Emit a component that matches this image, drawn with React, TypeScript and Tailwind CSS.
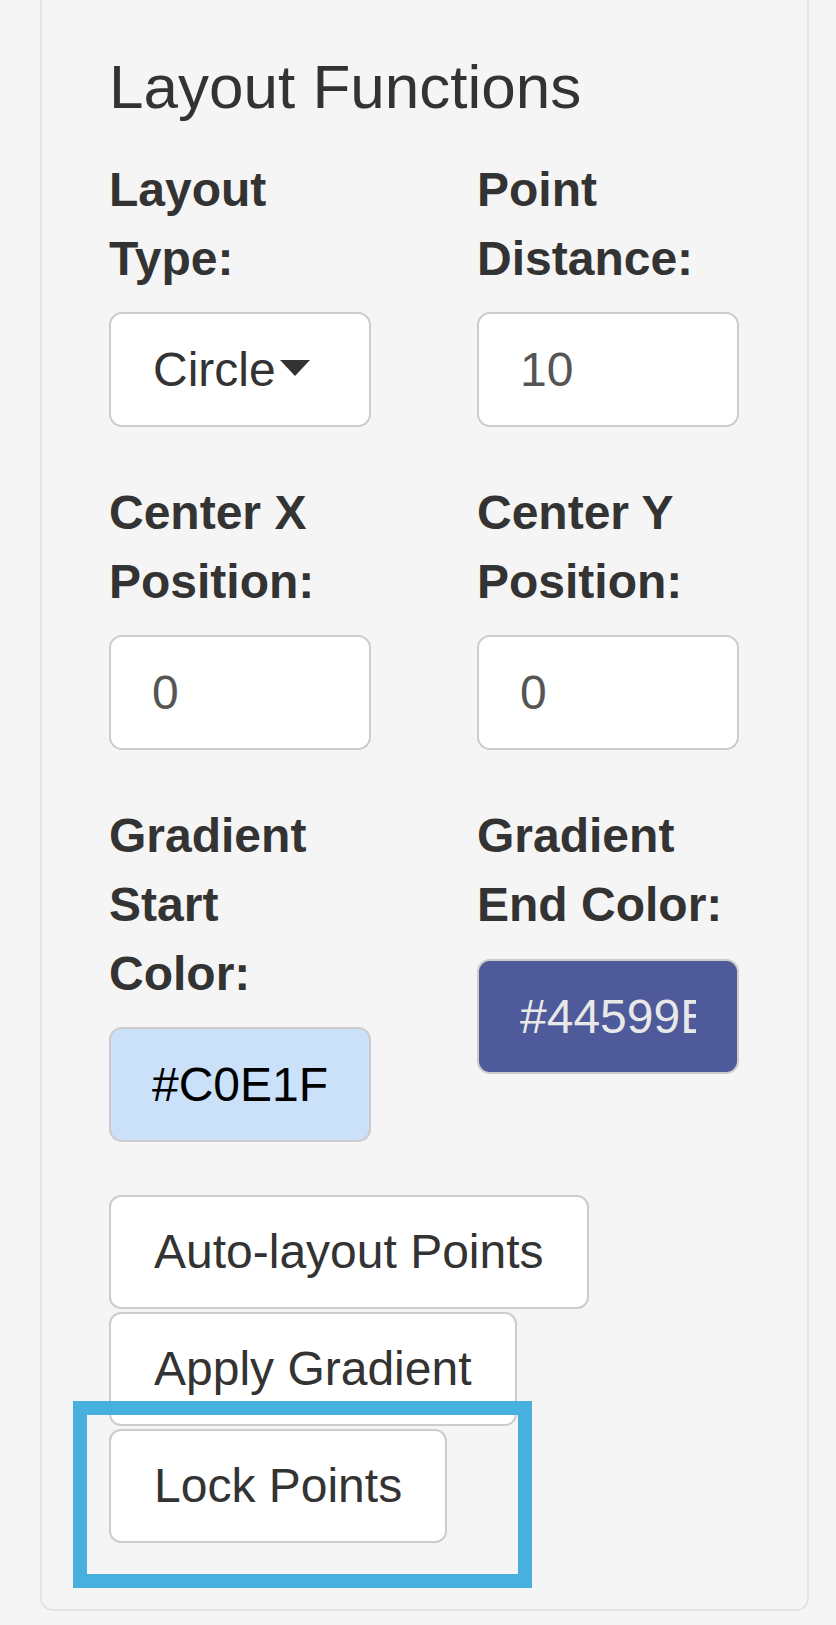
import React from "react";

const font = { fontFamily: '"Liberation Sans", Arial, Helvetica, sans-serif' };

function Label({ lines }: { lines: string[] }) {
  return (
    <div className="font-bold text-[48px] leading-[68.6px] text-[#333] mb-[19px]">
      {lines.map((l, i) => (
        <div key={i} className="whitespace-nowrap">
          {l}
        </div>
      ))}
    </div>
  );
}

function TextBox({ value, className = "" }: { value: string; className?: string }) {
  return (
    <input
      readOnly
      value={value}
      className={
        "block h-[115px] w-[262px] border-2 border-[#cccccc] rounded-[13px] px-[41px] text-[48px] outline-none " +
        className
      }
      style={font}
    />
  );
}

function Btn({ children }: { children: React.ReactNode }) {
  return (
    <button
      className="block bg-white border-2 border-[#cccccc] rounded-[12px] px-[43px] py-[21px] text-[48px] leading-[68px] text-[#333] whitespace-nowrap"
      style={font}
    >
      {children}
    </button>
  );
}

export default function App() {
  return (
    <div className="relative min-h-[1625px] bg-[#f5f5f5]" style={font}>
      <div className="ml-[40px] w-[769px] bg-[#f5f5f5] border-x-2 border-b-2 border-[#e3e3e3] rounded-b-[13px] pt-[53px] pl-[67px] pb-[66px]">
        <h4 className="text-[62px] leading-[68px] text-[#333] mb-[35px] whitespace-nowrap">Layout Functions</h4>

        <div className="flex mb-[52px]">
          <div className="w-[368px]">
            <Label lines={["Layout", "Type:"]} />
            <div className="flex items-center h-[115px] w-[262px] border-2 border-[#cccccc] rounded-[13px] bg-white pl-[42px] text-[48px] text-[#333]">
              <span>Circle</span>
              <span className="ml-[4px] mt-[-4px] inline-block w-0 h-0 border-t-[16px] border-t-[#333] border-x-[15px] border-x-transparent" />
            </div>
          </div>
          <div className="flex-1">
            <Label lines={["Point", "Distance:"]} />
            <TextBox value="10" className="bg-white text-[#555]" />
          </div>
        </div>

        <div className="flex mb-[52px]">
          <div className="w-[368px]">
            <Label lines={["Center X", "Position:"]} />
            <TextBox value="0" className="bg-white text-[#555]" />
          </div>
          <div className="flex-1">
            <Label lines={["Center Y", "Position:"]} />
            <TextBox value="0" className="bg-white text-[#555]" />
          </div>
        </div>

        <div className="flex">
          <div className="w-[368px]">
            <Label lines={["Gradient", "Start", "Color:"]} />
            <TextBox value="#C0E1F" className="bg-[#cae1f9] text-black" />
          </div>
          <div className="flex-1">
            <Label lines={["Gradient", "End Color:"]} />
            <TextBox value="#44599E" className="bg-[#4e5a99] text-[#e8e8e8]" />
          </div>
        </div>

        <div className="mt-[53px] flex flex-col items-start gap-[3px]">
          <Btn>Auto-layout Points</Btn>
          <Btn>Apply Gradient</Btn>
          <Btn>Lock Points</Btn>
        </div>
      </div>

      <div className="absolute left-[73px] top-[1401px] w-[459px] h-[187px] border-[14px] border-[#47b0de]" />
    </div>
  );
}
